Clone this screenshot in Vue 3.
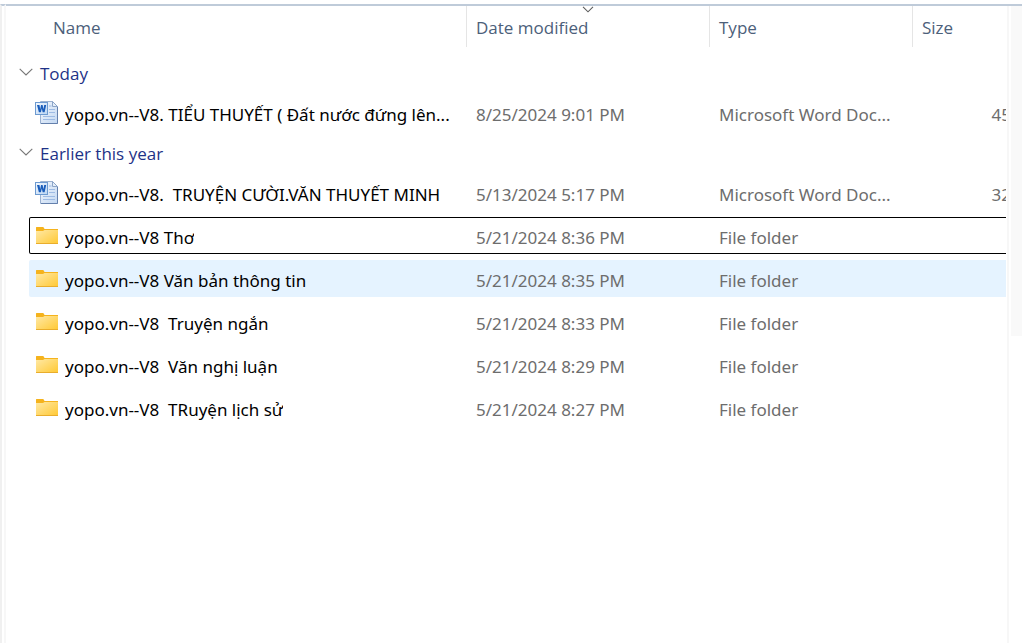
<script setup>
const groups = [
  {
    label: 'Today',
    items: [
      { name: 'yopo.vn--V8. TIỂU THUYẾT ( Đất nước đứng lên...', date: '8/25/2024 9:01 PM', type: 'Microsoft Word Doc...', kind: 'word', size: '45 KB' },
    ],
  },
  {
    label: 'Earlier this year',
    items: [
      { name: 'yopo.vn--V8.  TRUYỆN CƯỜI.VĂN THUYẾT MINH', date: '5/13/2024 5:17 PM', type: 'Microsoft Word Doc...', kind: 'word', size: '32 KB' },
      { name: 'yopo.vn--V8 Thơ', date: '5/21/2024 8:36 PM', type: 'File folder', kind: 'folder', state: 'focused' },
      { name: 'yopo.vn--V8 Văn bản thông tin', date: '5/21/2024 8:35 PM', type: 'File folder', kind: 'folder', state: 'hovered' },
      { name: 'yopo.vn--V8  Truyện ngắn', date: '5/21/2024 8:33 PM', type: 'File folder', kind: 'folder' },
      { name: 'yopo.vn--V8  Văn nghị luận', date: '5/21/2024 8:29 PM', type: 'File folder', kind: 'folder' },
      { name: 'yopo.vn--V8  TRuyện lịch sử', date: '5/21/2024 8:27 PM', type: 'File folder', kind: 'folder' },
    ],
  },
]
</script>

<template>
  <div class="window">
    <div class="rail"></div>
    <main class="panel">
      <table class="files">
        <thead>
          <tr class="cols">
            <th scope="col">Name</th>
            <th scope="col" class="sorted">
              Date modified
              <svg class="sort" width="12" height="7" viewBox="0 0 12 7" aria-hidden="true">
                <path d="M1 .8 6 5.8 11 .8" fill="none" stroke="#5c5c5c" stroke-width="1.1" />
              </svg>
            </th>
            <th scope="col">Type</th>
            <th scope="col">Size</th>
          </tr>
        </thead>
        <tbody v-for="g in groups" :key="g.label">
          <tr class="group">
            <th scope="rowgroup">
              <button type="button" class="toggle">
                <svg width="14" height="8" viewBox="0 0 14 8" aria-hidden="true">
                  <path d="M.7 .8 7 7 13.3 .8" fill="none" stroke="#767676" stroke-width="1.1" />
                </svg>
                <span>{{ g.label }}</span>
              </button>
            </th>
          </tr>
          <tr v-for="f in g.items" :key="f.name" class="row" :class="f.state">
            <td class="name">
              <svg v-if="f.kind === 'word'" class="icon" width="24" height="24" viewBox="0 0 24 24" aria-hidden="true">
                <defs>
                  <linearGradient id="page" x1="0" y1="0" x2="1" y2="1">
                    <stop offset="0" stop-color="#f4f8fd" />
                    <stop offset="1" stop-color="#c3d8f2" />
                  </linearGradient>
                  <linearGradient id="tile" x1="0" y1="0" x2="1" y2="1">
                    <stop offset="0" stop-color="#f4f9ff" />
                    <stop offset="1" stop-color="#b9d5f3" />
                  </linearGradient>
                </defs>
                <path d="M5.500 .5H17.500L22.500 5.500V22.500H5.500Z" fill="url(#page)" stroke="#9bb1d0" />
                <path d="M22.500 6V22.500H6" fill="none" stroke="#6480ac" />
                <path d="M17.500 .5V5.500H22.500Z" fill="#e6effa" stroke="#8ca5c8" />
                <path d="M14 5h2.500M14 8.500h6M14 11.500h6" stroke="#9dbbe4" />
                <path d="M8 15.500h12M8 18.500h12" stroke="#9dbbe4" />
                <rect x=".5" y="1.500" width="12" height="12" fill="url(#tile)" stroke="#6d9ad0" />
                <path d="M2 4H4.500L5.200 8.200 6 4H7.600L8.500 8.200 9.200 4H11.200L9.600 11.200H7.700L6.800 7.400 5.900 11.200H3.900Z" fill="#1a5dbb" />
              </svg>
              <svg v-else class="icon" width="24" height="24" viewBox="0 0 24 24" aria-hidden="true">
                <defs>
                  <linearGradient id="folder" x1="0" y1="0" x2="1" y2="1">
                    <stop offset="0" stop-color="#ffe9a6" />
                    <stop offset="1" stop-color="#ffc832" />
                  </linearGradient>
                </defs>
                <path d="M1 3.500Q1 3 1.500 3H8Q8.500 3 9 4L9.500 5H23V8H1Z" fill="#f5b31d" />
                <path d="M1 7H8L9.500 6H23V20H1Z" fill="url(#folder)" />
                <path d="M1 19.500H23" stroke="#e9ad2c" />
              </svg>
              <span class="label">{{ f.name }}</span>
            </td>
            <td>{{ f.date }}</td>
            <td>{{ f.type }}</td>
            <td class="size">{{ f.size }}</td>
          </tr>
        </tbody>
      </table>
    </main>
    <div class="gutter"><div class="pane"></div></div>
  </div>
</template>

<style>
body {
  background: #fff;
}
</style>

<style scoped>
.window {
  display: flex;
  box-sizing: border-box;
  min-height: 100vh;
  padding-top: 4px;
  font: 17px/24px "Open Sans", "Noto Sans", sans-serif;
  color: #6d6d6d;
}
.window > * {
  border-top: 2px solid #bfcbd9;
}
.rail {
  box-sizing: border-box;
  flex: 0 0 6px;
  border-left: 2px solid #f0f0f0;
  border-right: 2px solid #f7f7f7;
}
.panel {
  flex: 1;
  min-width: 0;
  overflow: hidden;
}
.gutter {
  box-sizing: border-box;
  flex: 0 0 16px;
  padding-left: 5px;
  background: linear-gradient(#f7f7f7, #f7f7f7) 1px 0 / 2px 100% no-repeat;
}
.pane {
  height: 330px;
  background: #f9f9f9;
}
.files {
  display: block;
  box-sizing: border-box;
  width: calc(100% + 43px);
  padding-left: 23px;
}
thead,
tbody {
  display: block;
}
.cols,
.row {
  display: grid;
  grid-template-columns: minmax(0, 1fr) 243px 203px 136px;
}
th,
td {
  padding: 0 9px;
  font-weight: 400;
  text-align: left;
  white-space: pre;
}
.cols {
  margin-bottom: 4px;
  color: #4c607a;
}
.cols th {
  padding: 10px 9px 7px;
  border-right: 1px solid #e5e5e5;
}
.cols th:first-child {
  padding-left: 24px;
}
.sorted {
  position: relative;
  white-space: nowrap;
}
.sort {
  position: absolute;
  top: 0;
  left: 50%;
  margin-left: -6px;
}
.group {
  display: flex;
  align-items: center;
  height: 43px;
  margin-left: -19px;
}
.toggle {
  display: flex;
  align-items: center;
  gap: 7px;
  padding: 2px 0 0;
  border: 0;
  background: none;
  font: inherit;
  color: #1e3287;
}
.toggle svg {
  margin-bottom: 4px;
}
.row {
  box-sizing: border-box;
  height: 37px;
  padding-top: 5px;
  align-items: center;
  border-radius: 2px;
  font-family: "Noto Sans", "Open Sans", sans-serif;
}
.row + .row {
  margin-top: 6px;
}
.focused {
  box-shadow: inset 0 0 0 1px #000;
}
.hovered {
  background: #e5f3ff;
}
.name {
  display: flex;
  align-items: center;
  gap: 6px;
  padding: 0 0 0 6px;
  color: #000;
}
.icon {
  flex: none;
  margin-bottom: 4px;
}
.label {
  overflow: hidden;
}
.row .size {
  padding-right: 12px;
  text-align: right;
}
</style>
